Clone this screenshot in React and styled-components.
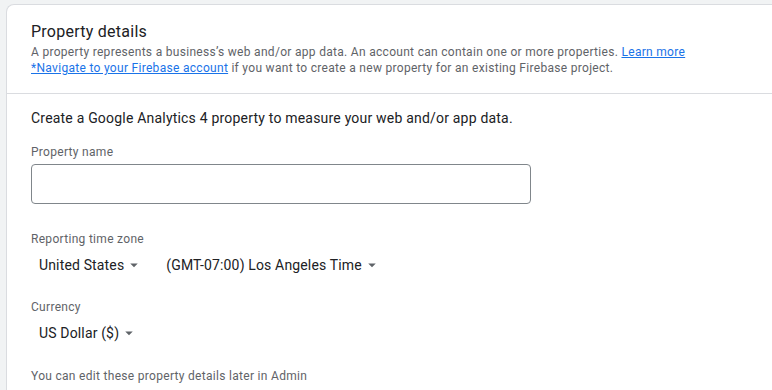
import React from 'react';
import styled, { createGlobalStyle } from 'styled-components';

const GlobalStyle = createGlobalStyle`
	html, body {
		margin: 0;
		padding: 0;
		background: #f1f3f4;
		font-family: Roboto, 'Liberation Sans', Arial, sans-serif;
		overflow: hidden;
	}
`;

function ArrowDown() {
	return (
		<svg width="18" height="18" viewBox="0 0 24 24" aria-hidden="true">
			<path d="M7 10l5 5 5-5z" fill="#5f6368" />
		</svg>
	);
}

export default function App() {
	return (
		<>
			<GlobalStyle />
			<Page>
				<Card>
					<Header>
						<Title>Property details</Title>
						<Description>
							A property represents a business’s web and/or app data. An account
							can contain one or more properties. <Link href="#">Learn more</Link>
							<br />
							<Link href="#">*Navigate to your Firebase account</Link> if you want
							to create a new property for an existing Firebase project.
						</Description>
					</Header>
					<Body>
						<Intro>
							Create a Google Analytics 4 property to measure your web and/or app
							data.
						</Intro>
						<Field $top={16}>
							<Label>Property name</Label>
							<TextInput type="text" />
						</Field>
						<Field $top={27}>
							<Label>Reporting time zone</Label>
							<SelectRow>
								<Select>
									United States
									<ArrowDown />
								</Select>
								<Select>
									(GMT-07:00) Los Angeles Time
									<ArrowDown />
								</Select>
							</SelectRow>
						</Field>
						<Field $top={16}>
							<Label>Currency</Label>
							<SelectRow>
								<Select>
									US Dollar ($)
									<ArrowDown />
								</Select>
							</SelectRow>
						</Field>
						<Note>You can edit these property details later in Admin</Note>
					</Body>
				</Card>
			</Page>
		</>
	);
}

const Page = styled.div`
	padding: 4px 0 0 6px;
	height: 386px;
`;

const Card = styled.div`
	width: 820px;
	min-height: 420px;
	background: #fff;
	border: 1px solid #dadce0;
	border-right: none;
	border-radius: 8px 0 0 0;
`;

const Header = styled.div`
	padding: 15px 24px 17px 24px;
	border-bottom: 1px solid #dadce0;
`;

const Title = styled.h2`
	margin: 0;
	font-size: 16px;
	line-height: 24px;
	font-weight: 400;
	letter-spacing: 0.25px;
	color: #202124;
`;

const Description = styled.p`
	margin: 0;
	font-size: 12px;
	line-height: 16px;
	color: #5f6368;
	letter-spacing: 0.3px;
`;

const Link = styled.a`
	color: #1a73e8;
	text-decoration: underline;
`;

const Body = styled.div`
	display: flex;
	flex-direction: column;
	align-items: flex-start;
	padding: 14px 24px 0 24px;
`;

const Intro = styled.p`
	margin: 0;
	font-size: 14px;
	line-height: 20px;
	letter-spacing: 0.2px;
	color: #202124;
`;

const Field = styled.div`
	display: flex;
	flex-direction: column;
	margin-top: ${(p) => p.$top}px;
`;

const Label = styled.label`
	font-size: 12px;
	line-height: 16px;
	letter-spacing: 0.3px;
	color: #5f6368;
`;

const TextInput = styled.input`
	box-sizing: border-box;
	margin-top: 4px;
	width: 500px;
	height: 40px;
	border: 1px solid #80868b;
	border-radius: 4px;
	padding: 0 12px;
	font-family: inherit;
	font-size: 14px;
	outline: none;
`;

const SelectRow = styled.div`
	display: flex;
	align-items: center;
	gap: 7px;
`;

const Select = styled.div`
	display: flex;
	align-items: center;
	gap: 1px;
	height: 36px;
	padding: 0 8px;
	font-size: 14px;
	letter-spacing: 0.15px;
	color: #202124;
	cursor: pointer;
`;

const Note = styled.p`
	margin: 17px 0 0 0;
	font-size: 12px;
	line-height: 16px;
	letter-spacing: 0.3px;
	color: #5f6368;
`;
